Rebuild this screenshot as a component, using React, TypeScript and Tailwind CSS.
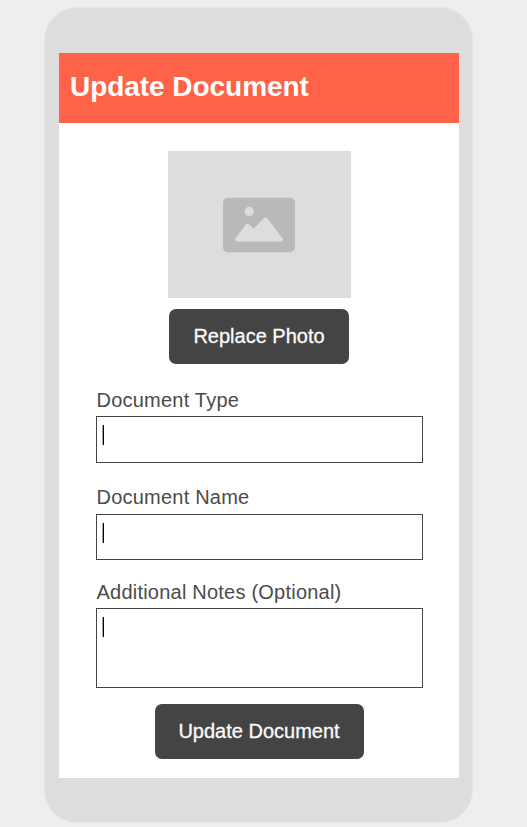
import React from "react";

function PhotoIcon() {
  return (
    <svg width="74" height="57" viewBox="0 0 74 57" aria-hidden="true">
      <rect x="1" y="0.7" width="72" height="54.6" rx="5" fill="#b9b9b9" />
      <circle cx="27.2" cy="14.4" r="4.6" fill="#dddddd" />
      <path
        d="M15 42.4 L25.6 28.6 L31.8 34.6 L43.4 22.3 L59 42.4 Z"
        fill="#dddddd"
        stroke="#dddddd"
        strokeWidth="4"
        strokeLinejoin="round"
      />
    </svg>
  );
}

function Button({ label, className }: { label: string; className: string }) {
  return (
    <button
      type="button"
      className={`mx-auto block h-[55px] rounded-[7px] bg-[#444444] pb-[2px] text-xl leading-6 text-[#fafafa] [-webkit-text-stroke:0.3px_#fafafa] ${className}`}
    >
      {label}
    </button>
  );
}

function Field({ label, className, boxClass }: { label: string; className: string; boxClass: string }) {
  return (
    <label className={`block ${className}`}>
      <span className="block h-6 whitespace-nowrap pl-[0.5px] text-xl leading-6 tracking-[0.22px] text-[#4b4b4b]">{label}</span>
      <span className={`block w-[327px] border border-[#444444] pl-[5px] pt-2 ${boxClass}`}>
        <span className="block h-5 w-[2px] border-l border-[#a8a8a8] bg-black" />
      </span>
    </label>
  );
}

export default function App() {
  return (
    <div className="h-[827px] w-[527px] overflow-hidden bg-[#eeeeee] pl-11 pt-[7px] font-['Liberation_Sans',Arial,sans-serif]">
      <div className="h-[816px] w-[429px] rounded-[33px] border border-[#e5e5e5] bg-[#dddddd] pl-[14px] pt-[45px]">
        <main className="h-[725px] w-[400px] bg-white">
          <header className="flex h-[70px] items-center bg-[#ff6347] pb-[2px] pl-[11px]">
            <h1 className="text-[28px] font-bold leading-8 tracking-[-0.05px] text-white">Update Document</h1>
          </header>
          <div className="ml-[109px] mt-7 flex h-[147px] w-[183px] items-center justify-center bg-[#dddddd] pr-[2px] pt-[2px]">
            <PhotoIcon />
          </div>
          <Button label="Replace Photo" className="mt-[11px] w-[180px]" />
          <div className="ml-[37px]">
            <Field label="Document Type" className="mt-6" boxClass="mt-1 h-[47px]" />
            <Field label="Document Name" className="mt-[22px]" boxClass="mt-[5px] h-[46px]" />
            <Field label="Additional Notes (Optional)" className="mt-5" boxClass="mt-1 h-20" />
          </div>
          <Button label="Update Document" className="mt-4 w-[209px]" />
        </main>
      </div>
    </div>
  );
}
